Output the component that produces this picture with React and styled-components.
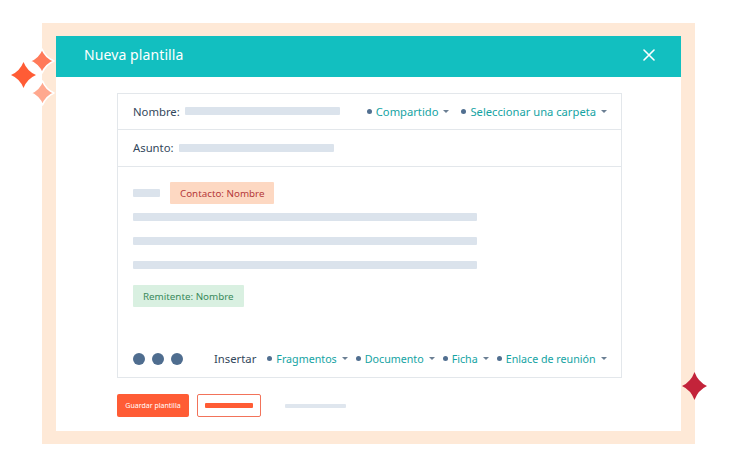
import React from "react";
import styled, { createGlobalStyle } from "styled-components";

const Global = createGlobalStyle`
  html, body { margin: 0; padding: 0; background: #fff; }
  body { font-family: "Noto Sans", "Open Sans", sans-serif; }
  * { box-sizing: border-box; }
`;

const Page = styled.div`
  position: relative;
  width: 737px;
  height: 468px;
  background: #fff;
  padding: 23px 0 0 42px;
  overflow: hidden;
`;

const Frame = styled.div`
  width: 653px;
  height: 421px;
  background: #fee9d7;
  padding: 13px 14px 13px 14px;
`;

const Sheet = styled.div`
  background: #fff;
  height: 100%;
  display: flex;
  flex-direction: column;
`;

const Header = styled.div`
  height: 41px;
  background: #12bfc0;
  display: flex;
  align-items: center;
  justify-content: space-between;
  padding: 0 26px 4px 28px;
`;

const Title = styled.div`
  color: #fff;
  font-size: 14px;
  letter-spacing: 0.1px;
`;

const Content = styled.div`
  padding: 16px 0 0 61px;
  display: flex;
  flex-direction: column;
  gap: 16px;
`;

const Card = styled.div`
  width: 505px;
  height: 285px;
  border: 1px solid #e3e7eb;
  display: flex;
  flex-direction: column;
`;

const FieldRow = styled.div`
  height: ${(p) => p.$h}px;
  border-bottom: 1px solid #e3e7eb;
  display: flex;
  align-items: center;
  padding: 0 14px 1px 15px;
  gap: 5px;
`;

const Label = styled.span`
  font-size: 11.3px;
  color: #33475b;
  white-space: nowrap;
`;

const Bar = styled.div`
  width: ${(p) => p.$w}px;
  height: ${(p) => p.$h || 8}px;
  background: ${(p) => p.$c || "#dbe3ec"};
  border-radius: 1px;
  flex: none;
`;

const Spacer = styled.div`
  flex: 1;
`;

const Menu = styled.span`
  display: inline-flex;
  align-items: center;
  font-size: ${(p) => p.$fs}px;
  color: #14a3a3;
  white-space: nowrap;
  flex: none;
  margin-left: ${(p) => p.$ml || 0}px;
`;

const Dot = styled.span`
  width: 5px;
  height: 5px;
  border-radius: 50%;
  background: #516f90;
  margin-right: 4px;
  flex: none;
`;

const Caret = styled.span`
  width: 0;
  height: 0;
  border-left: 3px solid transparent;
  border-right: 3px solid transparent;
  border-top: 3.5px solid #6b7f93;
  margin-left: 5px;
  flex: none;
`;

const Body = styled.div`
  flex: 1;
  display: flex;
  flex-direction: column;
  padding: 15px 12px 11px 15px;
`;

const TagRow = styled.div`
  display: flex;
  align-items: center;
  gap: 10px;
`;

const Tag = styled.div`
  height: 22px;
  display: inline-flex;
  align-items: center;
  padding: 0 ${(p) => p.$px}px;
  background: ${(p) => p.$bg};
  color: ${(p) => p.$fg};
  font-size: 9.8px;
  border-radius: 1px;
  align-self: flex-start;
  white-space: nowrap;
`;

const Lines = styled.div`
  display: flex;
  flex-direction: column;
  gap: 16px;
  margin: 9px 0 16px;
`;

const Toolbar = styled.div`
  margin-top: auto;
  display: flex;
  align-items: center;
`;

const Circles = styled.div`
  display: flex;
  gap: 7px;
  margin-right: 31px;
  flex: none;
`;

const Circle = styled.span`
  width: 12px;
  height: 12px;
  border-radius: 50%;
  background: #4f6d8f;
`;

const Insert = styled.span`
  font-size: 11.3px;
  color: #33475b;
  margin-right: 11px;
  white-space: nowrap;
`;

const Buttons = styled.div`
  display: flex;
  align-items: center;
`;

const Primary = styled.button`
  width: 72px;
  height: 23px;
  border: none;
  border-radius: 2px;
  background: #ff5c35;
  color: #fff;
  font-family: inherit;
  font-size: 7px;
  padding: 0;
  margin-right: 8px;
  white-space: nowrap;
`;

const Secondary = styled.button`
  width: 64px;
  height: 23px;
  border: 1px solid #f2735a;
  border-radius: 2px;
  background: #fff;
  display: flex;
  align-items: center;
  justify-content: center;
  padding: 0;
  margin-right: 24px;
`;

const Star = styled.svg`
  position: absolute;
  left: ${(p) => p.$x}px;
  top: ${(p) => p.$y}px;
  overflow: visible;
`;

const StarShape = ({ x, y, w, h, c, halo }) => (
  <Star $x={x - w / 2} $y={y - h / 2} width={w} height={h} viewBox="0 0 20 20" preserveAspectRatio="none">
    <path
      d="M10 0 Q12.9 7.1 20 10 Q12.9 12.9 10 20 Q7.1 12.9 0 10 Q7.1 7.1 10 0 Z"
      fill={c}
      stroke={halo ? "#fff" : "none"}
      strokeWidth={halo ? 1.4 : 0}
      strokeLinejoin="round"
    />
  </Star>
);

const Close = () => (
  <svg width="12" height="12" viewBox="0 0 12 12">
    <path d="M1 1 L11 11 M11 1 L1 11" stroke="#fff" strokeWidth="1.6" strokeLinecap="round" />
  </svg>
);

const DropMenu = ({ children, ml, fs = 11.2 }) => (
  <Menu $ml={ml} $fs={fs}>
    <Dot />
    {children}
    <Caret />
  </Menu>
);

export default function App() {
  return (
    <Page>
      <Global />
      <Frame>
        <Sheet>
          <Header>
            <Title>Nueva plantilla</Title>
            <Close />
          </Header>
          <Content>
            <Card>
              <FieldRow $h={36}>
                <Label>Nombre:</Label>
                <Bar $w={155} />
                <Spacer />
                <DropMenu>Compartido</DropMenu>
                <DropMenu ml={7}>Seleccionar una carpeta</DropMenu>
              </FieldRow>
              <FieldRow $h={37}>
                <Label>Asunto:</Label>
                <Bar $w={155} />
              </FieldRow>
              <Body>
                <TagRow>
                  <Bar $w={27} />
                  <Tag $bg="#fdd8c2" $fg="#b5383a" $px={10}>Contacto: Nombre</Tag>
                </TagRow>
                <Lines>
                  <Bar $w={344} />
                  <Bar $w={344} />
                  <Bar $w={344} />
                </Lines>
                <Tag $bg="#d9f0e1" $fg="#3a8a5c" $px={10}>Remitente: Nombre</Tag>
                <Toolbar>
                  <Circles>
                    <Circle />
                    <Circle />
                    <Circle />
                  </Circles>
                  <Insert>Insertar</Insert>
                  <DropMenu fs={10.7}>Fragmentos</DropMenu>
                  <DropMenu fs={10.7} ml={8}>Documento</DropMenu>
                  <DropMenu fs={10.7} ml={8}>Ficha</DropMenu>
                  <DropMenu fs={10.7} ml={8}>Enlace de reunión</DropMenu>
                </Toolbar>
              </Body>
            </Card>
            <Buttons>
              <Primary>Guardar plantilla</Primary>
              <Secondary>
                <Bar $w={48} $h={5} $c="#ff5c35" />
              </Secondary>
              <Bar $w={61} $h={4} $c="#dfe6ee" />
            </Buttons>
          </Content>
        </Sheet>
      </Frame>
      <StarShape x={23} y={75} w={25} h={26} c="#ff5c35" />
      <StarShape x={42} y={61} w={24} h={24} c="#ff7a59" halo />
      <StarShape x={42} y={93} w={23} h={24} c="#ffa88e" halo />
      <StarShape x={694} y={386} w={25} h={28} c="#c3233a" />
    </Page>
  );
}
